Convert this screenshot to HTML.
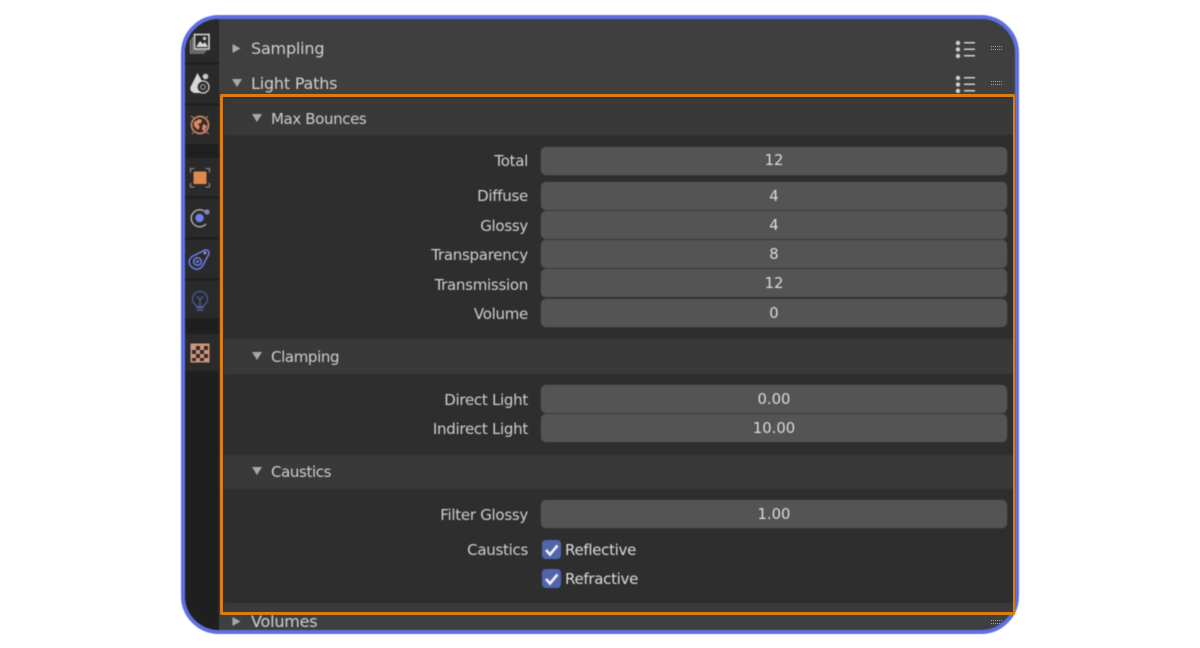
<!DOCTYPE html>
<html>
<head>
<meta charset="utf-8">
<style>
html,body{margin:0;padding:0;background:#fff;width:1200px;height:648px;overflow:hidden}
body{font-family:"DejaVu Sans",sans-serif;color:#d2d2d2}
#wrap{position:absolute;left:0;top:0;width:1200px;height:648px;filter:blur(.4px)}
.a{position:absolute}
#frame{left:181px;top:15px;width:838px;height:619px;box-sizing:border-box;border:4px solid #5e6ee6;border-radius:38px;overflow:hidden;background:#3f3f3f}
#side{left:0;top:0;width:34px;height:100%;background:#1f1f1f}
.tab{position:absolute;left:0;width:34px;background:#2a2a2a}
.ft{position:absolute;left:541px;width:466px;height:28px;background:#545454;border-radius:5px;text-align:center;font-size:14.8px;line-height:30px;color:#dcdcdc;box-shadow:0 0 0 .5px #3a3a3a}
.lb{position:absolute;width:528px;left:0;text-align:right;font-size:15px;letter-spacing:-.28px;line-height:30px;color:#cfcfcf}
.sh{position:absolute;left:224px;width:790px;background:#393939}
.st{position:absolute;left:271px;font-size:15px;letter-spacing:-.38px;line-height:20px;color:#cdcdcd}
.pt{position:absolute;left:251px;font-size:16px;letter-spacing:-.2px;line-height:20px;color:#cfcfcf}
.cb{position:absolute;left:542px;width:19px;height:19px;background:#5165ad;border-radius:4px}
.cl{position:absolute;left:565px;font-size:15px;letter-spacing:-.3px;line-height:20px;color:#dcdcdc}
svg{position:absolute;overflow:visible}
</style>
</head>
<body>
<div id="wrap">
<div class="a" id="frame">
  <div class="a" id="side">
    <div class="tab" style="top:0;height:43px"></div>
    <div class="tab" style="top:46px;height:38px"></div>
    <div class="tab" style="top:87px;height:38px"></div>
    <div class="tab" style="top:139px;height:38px"></div>
    <div class="tab" style="top:180px;height:38px"></div>
    <div class="tab" style="top:221px;height:38px"></div>
    <div class="tab" style="top:262px;height:37px"></div>
    <div class="tab" style="top:315px;height:37px"></div>
  </div>
</div>

<!-- tab icons -->
<svg style="left:0;top:0" width="1200" height="648">
  <g fill="none">
    <rect x="194.500" y="34.500" width="14.500" height="14.500" stroke="#d4d4d4" stroke-width="1.600"/>
    <path d="M192.500 37v14h14M190.500 39.500v13.500h14" stroke="#8e8e8e" stroke-width="1.200"/>
  </g>
  <path d="M196 47l4-6 3 3 2-2 3 5z" fill="#d4d4d4"/><circle cx="204.500" cy="38.500" r="1.600" fill="#d4d4d4"/>
  <path d="M197.500 73l5 9 1 8-3 3h-6c-3-1-5-3-4-6z" fill="#d8d8d8"/>
  <circle cx="205.500" cy="76.500" r="2.800" fill="#c8c8c8"/>
  <circle cx="203" cy="87" r="6" fill="#2a2a2a" stroke="#d0d0d0" stroke-width="1.300"/><circle cx="203" cy="87" r="2.400" fill="none" stroke="#b0b0b0" stroke-width="1"/>
  <g>
    <circle cx="200" cy="125" r="8.500" fill="#3a2a26" stroke="#c98468" stroke-width="1.700"/>
    <path d="M194 122l5-3 3 1-1 3-3 1 2 3-2 3-4-4zM203 124l4 2-3 6-2-3z" fill="#d98a66"/>
    <path d="M192 134l3-3M205 119l3-3M191 116l3 2M209 134l-3-2" stroke="#a87862" stroke-width="1.200" fill="none"/>
  </g>
  <path d="M190.500 172.500v-4h4M205.500 168.500h4v4M209.500 183v4h-4M194.500 187h-4v-4" fill="none" stroke="#a08e80" stroke-width="1.100"/>
  <rect x="193.500" y="171.500" width="13" height="12.500" fill="#e0884e"/>
  <path d="M205.500 212a8.500 8.500 0 1 0 .5 12" fill="none" stroke="#a8a8a8" stroke-width="1.500"/>
  <circle cx="199.500" cy="218" r="4.200" fill="#6f7fe8"/><circle cx="207" cy="212" r="2.600" fill="#7d86c0"/>
  <g fill="none" stroke="#6478d8" stroke-width="1.700">
    <path d="M193 256l11-5.500c3-1.500 5 .5 5 2.500 0 1.500-1 3-2 4.500l-4 7.500c-2 4-6 5-9 3.500-4-2-5.500-5.500-4.500-8.500.5-1.500 1.500-3 3.500-4z"/>
    <circle cx="197.500" cy="261.500" r="3.800"/>
  </g>
  <circle cx="197.500" cy="261.500" r="1.500" fill="#6478d8"/><circle cx="205" cy="253" r="1.400" fill="#9aa4d8"/>
  <g fill="none" stroke="#46538f" stroke-width="1.500">
    <circle cx="200" cy="299" r="7.500"/>
    <path d="M197 296l3 4 3-4M200 300v6"/>
    <path d="M196 307.500h8M197 310h6" stroke="#5663a8"/>
  </g>
  <rect x="190.500" y="343.500" width="19" height="19" fill="#d0957a"/>
  <g fill="#2e2a28">
    <rect x="196" y="346" width="4" height="4"/><rect x="204" y="346" width="4" height="4"/>
    <rect x="192" y="350" width="4" height="4"/><rect x="200" y="350" width="4" height="4"/>
    <rect x="196" y="354" width="4" height="4"/><rect x="204" y="354" width="4" height="4"/>
    <rect x="192" y="358" width="4" height="3"/><rect x="200" y="358" width="4" height="3"/>
  </g>
</svg>

<!-- top panel headers -->
<svg style="left:0;top:0" width="1200" height="648">
  <path d="M232.500 44v9l8-4.500z" fill="#a8a8a8"/>
  <path d="M232 79h10l-5 8z" fill="#a8a8a8"/>
  <path d="M232.500 617v9l8-4.500z" fill="#a8a8a8"/>
  <g fill="#d0d0d0">
    <circle cx="958" cy="43" r="2.200"/><circle cx="958" cy="49.500" r="2.200"/><circle cx="958" cy="56" r="2.200"/>
    <circle cx="958" cy="78" r="2.200"/><circle cx="958" cy="84.500" r="2.200"/><circle cx="958" cy="91" r="2.200"/>
    <rect x="964" y="42" width="11" height="1.500"/><rect x="964" y="48.500" width="11" height="1.500"/><rect x="964" y="55" width="11" height="1.500"/>
    <rect x="964" y="77" width="11" height="1.500"/><rect x="964" y="83.500" width="11" height="1.500"/><rect x="964" y="90" width="11" height="1.500"/>
  </g>
</svg>
<div class="pt" style="top:39px">Sampling</div>
<div class="pt" style="top:74px">Light Paths</div>
<div class="pt" style="top:612px">Volumes</div>

<!-- light paths panel -->
<div class="a" style="left:222px;top:96px;width:792px;height:517px;background:#2e2e2e"></div>
<div class="a" style="left:224px;top:603px;width:790px;height:10px;background:#3a3a3a"></div>
<div class="sh" style="top:98px;height:37px"></div>
<div class="sh" style="top:339px;height:35px"></div>
<div class="sh" style="top:455px;height:34px"></div>

<svg style="left:0;top:0" width="1200" height="648">
  <path d="M252 114h10l-5 8z" fill="#a8a8a8"/>
  <path d="M252 352h10l-5 8z" fill="#a8a8a8"/>
  <path d="M252 467h10l-5 8z" fill="#a8a8a8"/>
</svg>
<div class="st" style="top:108.500px">Max Bounces</div>
<div class="st" style="top:347px">Clamping</div>
<div class="st" style="top:462px">Caustics</div>

<div class="lb" style="top:147px;line-height:28px">Total</div><div class="ft" style="top:147px;line-height:28px">12</div>
<div class="lb" style="top:182px;line-height:28px">Diffuse</div><div class="ft" style="top:182px">4</div>
<div class="lb" style="top:211px">Glossy</div><div class="ft" style="top:211px">4</div>
<div class="lb" style="top:240px">Transparency</div><div class="ft" style="top:240px">8</div>
<div class="lb" style="top:270px">Transmission</div><div class="ft" style="top:269px">12</div>
<div class="lb" style="top:299px">Volume</div><div class="ft" style="top:299px">0</div>
<div class="lb" style="top:385px">Direct Light</div><div class="ft" style="top:385px">0.00</div>
<div class="lb" style="top:414px">Indirect Light</div><div class="ft" style="top:414px">10.00</div>
<div class="lb" style="top:500px">Filter Glossy</div><div class="ft" style="top:500px">1.00</div>
<div class="lb" style="top:536px;line-height:28px">Caustics</div>

<div class="cb" style="top:540px"></div>
<div class="cb" style="top:569px"></div>
<svg style="left:0;top:0" width="1200" height="648">
  <path d="M546 550l4 4.500 7.500-9M546 579l4 4.500 7.500-9" fill="none" stroke="#f2f2f2" stroke-width="2.600"/>
</svg>
<div class="cl" style="top:540px">Reflective</div>
<div class="cl" style="top:569px">Refractive</div>
</div>

<!-- sharp overlays: drag handles and orange outline -->
<svg style="left:0;top:0" width="1200" height="648">
  <g stroke="#a0a0a0" stroke-width="1" stroke-dasharray="1 1" fill="none">
    <path d="M991 46.500h11M991 49.500h11M991 81.500h11M991 84.500h11M991 620.500h11M991 623.500h11"/>
  </g>
</svg>
<div class="a" style="left:220px;top:94px;width:795px;height:521px;box-sizing:border-box;border:3px solid #dc7d12;border-right-width:2px;border-radius:2px"></div>
</body>
</html>
